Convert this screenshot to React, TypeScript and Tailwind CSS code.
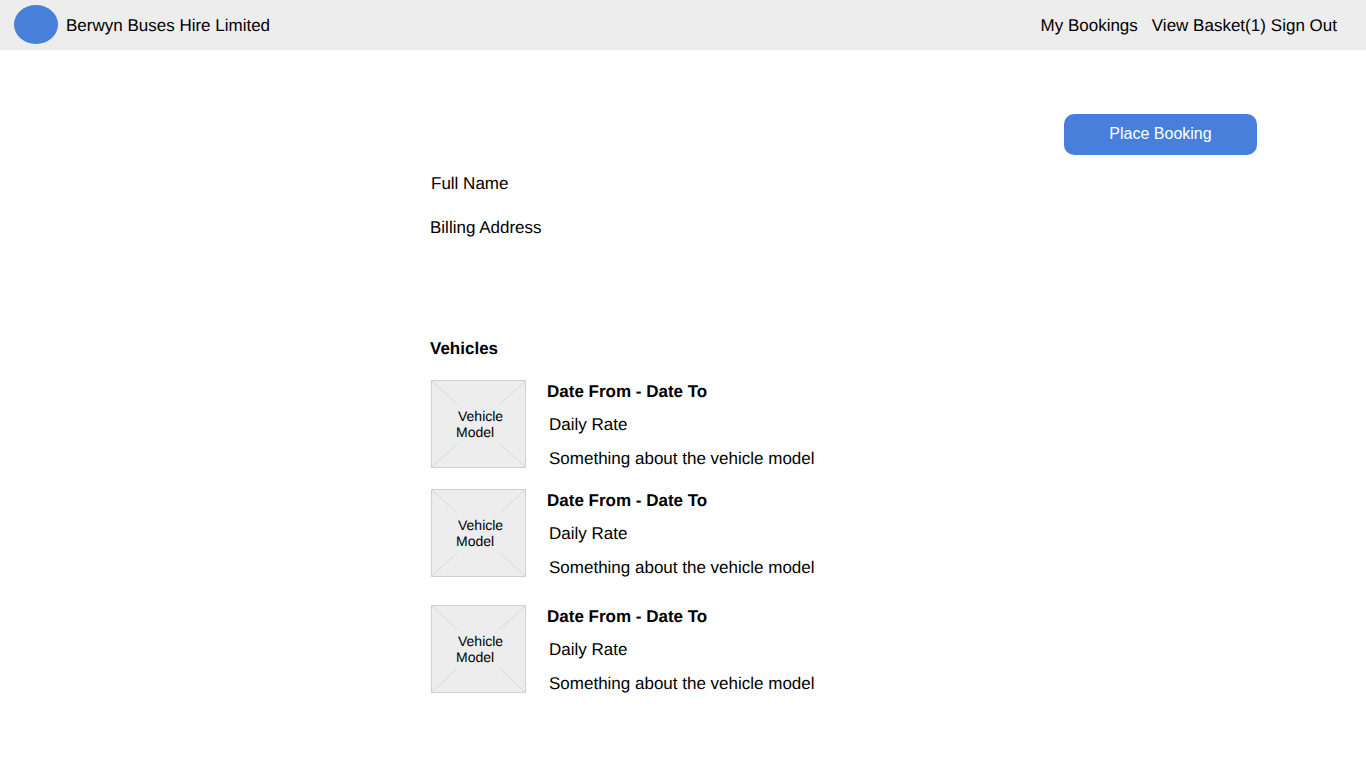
const vehicles = [
  { id: 1, className: "mt-[21px]" },
  { id: 2, className: "mt-[20px]" },
  { id: 3, className: "mt-[27px]" },
];

const Placeholder = () => (
  <div className="relative w-[95px] h-[88px] ml-px shrink-0 bg-[#ededed] border border-[#d0d0d0]">
    <svg className="absolute inset-0 w-full h-full" viewBox="0 0 93 86" preserveAspectRatio="none">
      <path d="M0 0L93 86M93 0L0 86" stroke="#d6d6d6" strokeWidth="1" fill="none" />
    </svg>
    <div className="absolute left-[24px] top-[23px] w-[50px] h-[40px] pt-[4px] bg-[#ededed] text-[14px] leading-[16px] text-black">
      <div className="pl-[2px]">Vehicle</div>
      <div>Model</div>
    </div>
  </div>
);

const VehicleRow = ({ className }: { className: string }) => (
  <div className={`flex ${className}`}>
    <Placeholder />
    <div className="ml-[21px] mt-[2px] text-[17px] leading-[20px]">
      <div className="font-bold">Date From - Date To</div>
      <div className="ml-[2px] mt-[13px]">Daily Rate</div>
      <div className="ml-[2px] mt-[14px]">Something about the vehicle model</div>
    </div>
  </div>
);

export default function App() {
  return (
    <div className="min-h-[760px] bg-white text-black font-['Liberation_Sans',Arial,sans-serif] text-[17px] leading-[20px] [text-rendering:geometricPrecision]">
      <header className="h-[50px] bg-[#ededed] flex items-start justify-between pt-[5px] pl-[14px] pr-[29px]">
        <div className="flex items-start">
          <div className="w-[44px] h-[39px] rounded-[50%] bg-[#477fdb]" />
          <span className="ml-[8px] mt-[11px]">Berwyn Buses Hire Limited</span>
        </div>
        <nav className="flex mt-[11px]">
          <a>My Bookings</a>
          <a className="ml-[14px]">View Basket(1)</a>
          <a className="ml-[5px]">Sign Out</a>
        </nav>
      </header>

      <main className="ml-[430px] w-[827px] pt-[64px]">
        <div className="flex justify-end">
          <button className="w-[193px] h-[41px] pb-[2px] rounded-[10px] bg-[#477fdb] text-white text-[16px]">
            Place Booking
          </button>
        </div>
        <div className="ml-px mt-[19px]">Full Name</div>
        <div className="mt-[24px]">Billing Address</div>
        <h2 className="mt-[101px] font-bold">Vehicles</h2>
        {vehicles.map((v) => (
          <VehicleRow key={v.id} className={v.className} />
        ))}
      </main>
    </div>
  );
}
